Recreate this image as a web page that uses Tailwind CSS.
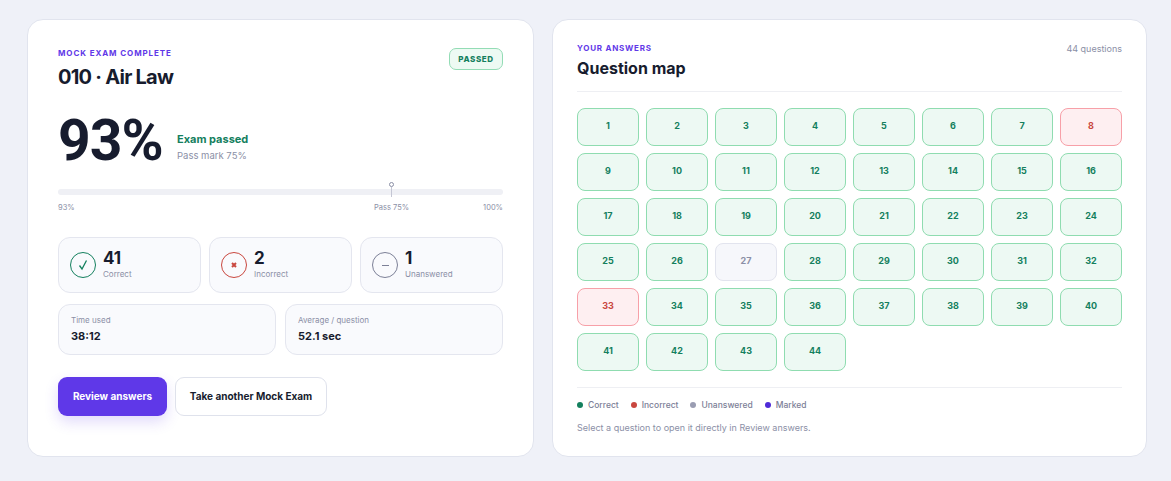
<!DOCTYPE html>
<html lang="en">
<head>
    <meta charset="UTF-8">
    <title>Mock exam result</title>
    <script src="https://cdn.jsdelivr.net/npm/@tailwindcss/browser@4"></script>
</head>
<body class="h-[481px] overflow-hidden bg-[#eff1f8] font-['Inter',sans-serif] text-[#171c2e]">
    <div class="flex items-start gap-[18px] pl-[27px] pt-[19px]">
        <!-- Result card -->
        <section class="h-[438px] w-[507px] rounded-[16px] border border-[#e1e4ee] bg-white px-[30px] pt-[28px]">
            <div class="flex items-start justify-between">
                <div>
                    <p class="h-[10px] text-[8px] leading-[10px] font-bold tracking-[0.9px] text-[#5f38e8]">MOCK EXAM COMPLETE</p>
                    <h1 class="mt-[5px] text-[20px] leading-[28px] font-bold tracking-[-0.75px]">010 · Air Law</h1>
                </div>
                <span class="flex h-[22px] w-[54px] items-center justify-center rounded-[7px] border border-[#93dcb5] bg-[#edfaf3] pb-px text-[8px] font-extrabold tracking-[0.6px] text-[#14805e]">PASSED</span>
            </div>
            <div class="mt-[15px] flex h-[62px] items-start">
                <span class="mt-[4px] w-[119px] font-['Roboto',sans-serif] text-[57px] leading-[62px] font-bold tracking-[-1px]">93%</span>
                <div class="mt-[25px]">
                    <p class="text-[11px] leading-[16px] font-bold text-[#14805e]">Exam passed</p>
                    <p class="mt-[2px] text-[9.5px] leading-[14px] text-[#8b8fa6]">Pass mark 75%</p>
                </div>
            </div>
            <!-- Score bar -->
            <div class="relative mt-[21px] h-[6px] rounded-full bg-[#eff0f5]">
                <div class="absolute top-[-7px] left-[331px] flex flex-col items-center">
                    <span class="h-[5px] w-[5px] rounded-full border border-[#8b8fa6] bg-white"></span>
                    <span class="h-[10px] w-px bg-[#c4c6d4]"></span>
                </div>
            </div>
            <div class="relative mt-[7px] flex h-[12px] justify-between text-[7.5px] leading-[12px] text-[#8b8fa6]">
                <span>93%</span>
                <span class="absolute left-[316px]">Pass 75%</span>
                <span>100%</span>
            </div>
            <!-- Counts -->
            <div class="mt-[23px] grid grid-cols-3 gap-[8px]">
                <div class="flex h-[56px] items-center gap-[7px] rounded-[12px] border border-[#e4e6ef] bg-[#f9fafd] pl-[11px]">
                    <span class="flex h-[26px] w-[26px] items-center justify-center rounded-full border border-[#14805e]">
                        <svg class="h-[12px] w-[12px]" viewBox="0 0 12 12" fill="none" stroke="#14805e" stroke-width="1.3"><path d="M2.5 6.5 5 10 9.5 1.5"/></svg>
                    </span>
                    <div class="-mt-[3px]">
                        <p class="text-[17px] leading-[20px] font-bold">41</p>
                        <p class="mt-px text-[8px] leading-[11px] text-[#8b8fa6]">Correct</p>
                    </div>
                </div>
                <div class="flex h-[56px] items-center gap-[7px] rounded-[12px] border border-[#e4e6ef] bg-[#f9fafd] pl-[11px]">
                    <span class="flex h-[26px] w-[26px] items-center justify-center rounded-full border border-[#c9473f]">
                        <svg class="h-[6px] w-[6px]" viewBox="0 0 6 6" fill="none" stroke="#c9473f" stroke-width="2"><path d="M1 1 5 5M5 1 1 5"/></svg>
                    </span>
                    <div class="-mt-[3px]">
                        <p class="text-[17px] leading-[20px] font-bold">2</p>
                        <p class="mt-px text-[8px] leading-[11px] text-[#8b8fa6]">Incorrect</p>
                    </div>
                </div>
                <div class="flex h-[56px] items-center gap-[7px] rounded-[12px] border border-[#e4e6ef] bg-[#f9fafd] pl-[11px]">
                    <span class="flex h-[26px] w-[26px] items-center justify-center rounded-full border border-[#7c8097]">
                        <span class="h-px w-[7px] bg-[#7c8097]"></span>
                    </span>
                    <div class="-mt-[3px]">
                        <p class="text-[17px] leading-[20px] font-bold">1</p>
                        <p class="mt-px text-[8px] leading-[11px] text-[#8b8fa6]">Unanswered</p>
                    </div>
                </div>
            </div>
            <!-- Timing -->
            <div class="mt-[11px] grid grid-cols-2 gap-[9px]">
                <div class="h-[51px] rounded-[12px] border border-[#e4e6ef] bg-[#f9fafd] pt-[9px] pl-[12px]">
                    <p class="text-[8px] leading-[12px] text-[#8b8fa6]">Time used</p>
                    <p class="mt-[3px] text-[11px] leading-[15px] font-bold">38:12</p>
                </div>
                <div class="h-[51px] rounded-[12px] border border-[#e4e6ef] bg-[#f9fafd] pt-[9px] pl-[12px]">
                    <p class="text-[8px] leading-[12px] text-[#8b8fa6]">Average / question</p>
                    <p class="mt-[3px] text-[11px] leading-[15px] font-bold">52.1 sec</p>
                </div>
            </div>
            <div class="mt-[22px] flex gap-[8px]">
                <button class="h-[39px] w-[109px] rounded-[9px] bg-[#5f38e8] text-[10px] font-bold text-white shadow-[0_6px_14px_rgba(95,56,232,0.18)]">Review answers</button>
                <button class="h-[39px] w-[152px] rounded-[9px] border border-[#dfe2ec] bg-white text-[10px] font-bold">Take another Mock Exam</button>
            </div>
        </section>

        <!-- Question map -->
        <section class="h-[438px] w-[595px] rounded-[16px] border border-[#e1e4ee] bg-white px-[24px] pt-[23px]">
            <div class="flex items-start justify-between border-b border-[#eeeff3] pb-[11px]">
                <div>
                    <p class="h-[10px] text-[8px] leading-[10px] font-bold tracking-[0.75px] text-[#5f38e8]">YOUR ANSWERS</p>
                    <h2 class="mt-[3px] text-[16px] leading-[24px] font-bold">Question map</h2>
                </div>
                <span class="mt-px text-[9px] leading-[10px] text-[#8b8fa6]">44 questions</span>
            </div>
            <div class="mt-[16px] grid grid-cols-8 gap-[7px]">
                <button class="h-[38px] rounded-[8px] border border-[#8fdcb0] bg-[#edf9f3] pb-[2px] text-[9px] font-bold text-[#14805e]">1</button>
                <button class="h-[38px] rounded-[8px] border border-[#8fdcb0] bg-[#edf9f3] pb-[2px] text-[9px] font-bold text-[#14805e]">2</button>
                <button class="h-[38px] rounded-[8px] border border-[#8fdcb0] bg-[#edf9f3] pb-[2px] text-[9px] font-bold text-[#14805e]">3</button>
                <button class="h-[38px] rounded-[8px] border border-[#8fdcb0] bg-[#edf9f3] pb-[2px] text-[9px] font-bold text-[#14805e]">4</button>
                <button class="h-[38px] rounded-[8px] border border-[#8fdcb0] bg-[#edf9f3] pb-[2px] text-[9px] font-bold text-[#14805e]">5</button>
                <button class="h-[38px] rounded-[8px] border border-[#8fdcb0] bg-[#edf9f3] pb-[2px] text-[9px] font-bold text-[#14805e]">6</button>
                <button class="h-[38px] rounded-[8px] border border-[#8fdcb0] bg-[#edf9f3] pb-[2px] text-[9px] font-bold text-[#14805e]">7</button>
                <button class="h-[38px] rounded-[8px] border border-[#f7a0a8] bg-[#feeff1] pb-[2px] text-[9px] font-bold text-[#c9473f]">8</button>
                <button class="h-[38px] rounded-[8px] border border-[#8fdcb0] bg-[#edf9f3] pb-[2px] text-[9px] font-bold text-[#14805e]">9</button>
                <button class="h-[38px] rounded-[8px] border border-[#8fdcb0] bg-[#edf9f3] pb-[2px] text-[9px] font-bold text-[#14805e]">10</button>
                <button class="h-[38px] rounded-[8px] border border-[#8fdcb0] bg-[#edf9f3] pb-[2px] text-[9px] font-bold text-[#14805e]">11</button>
                <button class="h-[38px] rounded-[8px] border border-[#8fdcb0] bg-[#edf9f3] pb-[2px] text-[9px] font-bold text-[#14805e]">12</button>
                <button class="h-[38px] rounded-[8px] border border-[#8fdcb0] bg-[#edf9f3] pb-[2px] text-[9px] font-bold text-[#14805e]">13</button>
                <button class="h-[38px] rounded-[8px] border border-[#8fdcb0] bg-[#edf9f3] pb-[2px] text-[9px] font-bold text-[#14805e]">14</button>
                <button class="h-[38px] rounded-[8px] border border-[#8fdcb0] bg-[#edf9f3] pb-[2px] text-[9px] font-bold text-[#14805e]">15</button>
                <button class="h-[38px] rounded-[8px] border border-[#8fdcb0] bg-[#edf9f3] pb-[2px] text-[9px] font-bold text-[#14805e]">16</button>
                <button class="h-[38px] rounded-[8px] border border-[#8fdcb0] bg-[#edf9f3] pb-[2px] text-[9px] font-bold text-[#14805e]">17</button>
                <button class="h-[38px] rounded-[8px] border border-[#8fdcb0] bg-[#edf9f3] pb-[2px] text-[9px] font-bold text-[#14805e]">18</button>
                <button class="h-[38px] rounded-[8px] border border-[#8fdcb0] bg-[#edf9f3] pb-[2px] text-[9px] font-bold text-[#14805e]">19</button>
                <button class="h-[38px] rounded-[8px] border border-[#8fdcb0] bg-[#edf9f3] pb-[2px] text-[9px] font-bold text-[#14805e]">20</button>
                <button class="h-[38px] rounded-[8px] border border-[#8fdcb0] bg-[#edf9f3] pb-[2px] text-[9px] font-bold text-[#14805e]">21</button>
                <button class="h-[38px] rounded-[8px] border border-[#8fdcb0] bg-[#edf9f3] pb-[2px] text-[9px] font-bold text-[#14805e]">22</button>
                <button class="h-[38px] rounded-[8px] border border-[#8fdcb0] bg-[#edf9f3] pb-[2px] text-[9px] font-bold text-[#14805e]">23</button>
                <button class="h-[38px] rounded-[8px] border border-[#8fdcb0] bg-[#edf9f3] pb-[2px] text-[9px] font-bold text-[#14805e]">24</button>
                <button class="h-[38px] rounded-[8px] border border-[#8fdcb0] bg-[#edf9f3] pb-[2px] text-[9px] font-bold text-[#14805e]">25</button>
                <button class="h-[38px] rounded-[8px] border border-[#8fdcb0] bg-[#edf9f3] pb-[2px] text-[9px] font-bold text-[#14805e]">26</button>
                <button class="h-[38px] rounded-[8px] border border-[#e2e4ee] bg-[#f6f7fb] pb-[2px] text-[9px] font-bold text-[#8b8fa6]">27</button>
                <button class="h-[38px] rounded-[8px] border border-[#8fdcb0] bg-[#edf9f3] pb-[2px] text-[9px] font-bold text-[#14805e]">28</button>
                <button class="h-[38px] rounded-[8px] border border-[#8fdcb0] bg-[#edf9f3] pb-[2px] text-[9px] font-bold text-[#14805e]">29</button>
                <button class="h-[38px] rounded-[8px] border border-[#8fdcb0] bg-[#edf9f3] pb-[2px] text-[9px] font-bold text-[#14805e]">30</button>
                <button class="h-[38px] rounded-[8px] border border-[#8fdcb0] bg-[#edf9f3] pb-[2px] text-[9px] font-bold text-[#14805e]">31</button>
                <button class="h-[38px] rounded-[8px] border border-[#8fdcb0] bg-[#edf9f3] pb-[2px] text-[9px] font-bold text-[#14805e]">32</button>
                <button class="h-[38px] rounded-[8px] border border-[#f7a0a8] bg-[#feeff1] pb-[2px] text-[9px] font-bold text-[#c9473f]">33</button>
                <button class="h-[38px] rounded-[8px] border border-[#8fdcb0] bg-[#edf9f3] pb-[2px] text-[9px] font-bold text-[#14805e]">34</button>
                <button class="h-[38px] rounded-[8px] border border-[#8fdcb0] bg-[#edf9f3] pb-[2px] text-[9px] font-bold text-[#14805e]">35</button>
                <button class="h-[38px] rounded-[8px] border border-[#8fdcb0] bg-[#edf9f3] pb-[2px] text-[9px] font-bold text-[#14805e]">36</button>
                <button class="h-[38px] rounded-[8px] border border-[#8fdcb0] bg-[#edf9f3] pb-[2px] text-[9px] font-bold text-[#14805e]">37</button>
                <button class="h-[38px] rounded-[8px] border border-[#8fdcb0] bg-[#edf9f3] pb-[2px] text-[9px] font-bold text-[#14805e]">38</button>
                <button class="h-[38px] rounded-[8px] border border-[#8fdcb0] bg-[#edf9f3] pb-[2px] text-[9px] font-bold text-[#14805e]">39</button>
                <button class="h-[38px] rounded-[8px] border border-[#8fdcb0] bg-[#edf9f3] pb-[2px] text-[9px] font-bold text-[#14805e]">40</button>
                <button class="h-[38px] rounded-[8px] border border-[#8fdcb0] bg-[#edf9f3] pb-[2px] text-[9px] font-bold text-[#14805e]">41</button>
                <button class="h-[38px] rounded-[8px] border border-[#8fdcb0] bg-[#edf9f3] pb-[2px] text-[9px] font-bold text-[#14805e]">42</button>
                <button class="h-[38px] rounded-[8px] border border-[#8fdcb0] bg-[#edf9f3] pb-[2px] text-[9px] font-bold text-[#14805e]">43</button>
                <button class="h-[38px] rounded-[8px] border border-[#8fdcb0] bg-[#edf9f3] pb-[2px] text-[9px] font-bold text-[#14805e]">44</button>
            </div>
            <div class="mt-[16px] border-t border-[#eeeff3] pt-[11px]">
                <div class="flex h-[12px] items-center gap-[12px] text-[8.5px] font-medium text-[#7c8097]">
                    <span class="flex items-center gap-[5px]"><span class="h-[6px] w-[6px] rounded-full bg-[#14805e]"></span>Correct</span>
                    <span class="flex items-center gap-[5px]"><span class="h-[6px] w-[6px] rounded-full bg-[#c9473f]"></span>Incorrect</span>
                    <span class="flex items-center gap-[5px]"><span class="h-[6px] w-[6px] rounded-full bg-[#9a9db2]"></span>Unanswered</span>
                    <span class="flex items-center gap-[5px]"><span class="h-[6px] w-[6px] rounded-full bg-[#4f2bd8]"></span>Marked</span>
                </div>
                <p class="mt-[11px] text-[9px] leading-[12px] text-[#8b8fa6]">Select a question to open it directly in Review answers.</p>
            </div>
        </section>
    </div>
</body>
</html>
